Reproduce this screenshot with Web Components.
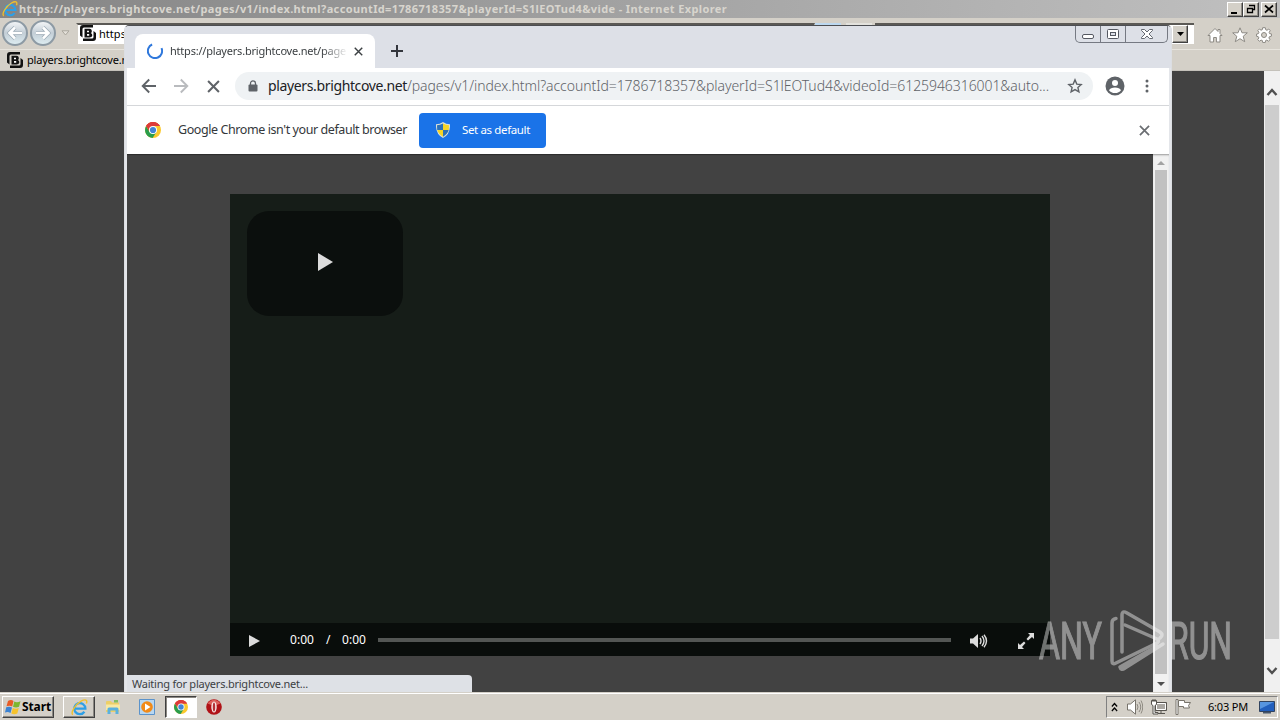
<!DOCTYPE html>
<html lang="en">
<head>
<meta charset="utf-8">
<title>Desktop</title>
<style>
    html, body {
        margin: 0;
        width: 1280px;
        height: 720px;
        overflow: hidden;
        font: 11px/14px "Noto Sans", "Open Sans", sans-serif;
        color: #000;
    }
</style>
</head>
<body>
<desktop-screen></desktop-screen>
<script>
const BALL = `
    <circle cx="8" cy="8" r="8" fill="#fbc92d"/>
    <path d="M8 8L1.1 4A8 8 0 0 1 14.9 4H8z" fill="#dd3b3a"/>
    <path d="M1.1 4A8 8 0 0 0 7.6 16L11.4 10 8 8 4.6 10z" fill="#2a9d4c"/>
    <path d="M1.1 4A8 8 0 0 1 14.9 4H8A4 4 0 0 0 4.2 9.2z" fill="#dd3b3a"/>
    <circle cx="8" cy="8" r="4" fill="#fff"/><circle cx="8" cy="8" r="3.1" fill="#4285d6"/>`;

const GLOBE = `
    <path d="M3.500 9H13.500A5.200 5.200 0 1 0 12.600 12" fill="none" stroke="#2d9fe6" stroke-width="2.200"/>
    <path d="M1.800 14.800C-.8 13.500 3.500 5.500 9.500 2 13.500-.3 15.800.8 14.500 4.200" fill="none" stroke="#f0c02c" stroke-width="1.300"/>`;

const ICONS = {
    chrome: ["0 0 16 16", BALL],
    ie: ["0 0 16 16", GLOBE],
    brightcove: ["0 0 16 16", `
        <path d="M3 0H13V2.500H4Q2.500 2.500 2.500 4V12.500L0 10.500V3Q0 0 3 0zM3 16V13.500H12Q13.500 13.500 13.500 12V6L16 8V13Q16 16 13 16z" fill="#111"/>
        <path d="M4.500 3.700H9.500Q12 4 11.800 6.500 11.600 7.500 11 8 12.500 9 12.300 10.500 12 12.500 9.500 12.500H4.500z" fill="#111"/>
        <path d="M7 5.700h2v1.500H7zM7 9h2.200v1.700H7z" fill="#fff"/>`],
    arrowLeft: ["0 0 16 16", `<path d="M15 8H2M8.200 1.500L1.700 8l6.500 6.500" fill="none" stroke="currentColor" stroke-width="1.900"/>`],
    arrowRight: ["0 0 16 16", `<path d="M1 8h13M7.800 1.500L14.300 8l-6.500 6.500" fill="none" stroke="currentColor" stroke-width="1.900"/>`],
    roundLeft: ["0 0 16 16", `<path d="M15 8H3M8 2.500L2.500 8 8 13.500" fill="none" stroke="#9aa9b4" stroke-width="4"/><path d="M15 8H3M8 2.500L2.500 8 8 13.500" fill="none" stroke="#fff" stroke-width="2.600"/>`],
    roundRight: ["0 0 16 16", `<path d="M1 8h12M8 2.500L13.500 8 8 13.500" fill="none" stroke="#9aa9b4" stroke-width="4"/><path d="M1 8h12M8 2.500L13.500 8 8 13.500" fill="none" stroke="#fff" stroke-width="2.600"/>`],
    close: ["0 0 12 12", `<path d="M1 1l10 10M11 1L1 11" stroke="currentColor" stroke-width="1.900"/>`],
    plus: ["0 0 12 12", `<path d="M6 0v12M0 6h12" stroke="currentColor" stroke-width="2"/>`],
    lock: ["0 0 10 12", `<path d="M2.500 5V3.400a2.500 2.500 0 0 1 5 0V5" fill="none" stroke="currentColor" stroke-width="1.300"/><rect x=".5" y="4.500" width="9" height="7" rx="1" fill="currentColor"/>`],
    star: ["0 0 16 16", `<path d="M8 1.900l1.800 4.200 4.400.4-3.300 3 1 4.400L8 11.600l-3.900 2.300 1-4.400L1.800 6.500l4.400-.4z" fill="none" stroke="currentColor" stroke-width="1.400"/>`],
    account: ["0 0 20 20", `<circle cx="10" cy="10" r="9.500" fill="currentColor"/><circle cx="10" cy="7" r="3" fill="#fff"/><path d="M4 14.200Q5.500 11.500 10 11.500T16 14.200Q14 17 10 17T4 14.200z" fill="#fff"/>`],
    dots: ["0 0 4 14", `<g fill="currentColor"><circle cx="2" cy="2" r="1.500"/><circle cx="2" cy="7" r="1.500"/><circle cx="2" cy="12" r="1.500"/></g>`],
    spinner: ["0 0 16 16", `<path d="M8 .9A7.100 7.100 0 1 0 15.100 8" transform="rotate(-24 8 8) matrix(1 0 0 1 0 0)" fill="none" stroke="#2f78dc" stroke-width="2"/>`],
    shield: ["0 0 14 16", `<path d="M7 0Q10 2.200 14 2.300 14.500 12 7 16-.5 12 0 2.300 4 2.200 7 0z" fill="#d9dfd6"/><path d="M7 1.500V8H1.200L1 3.300Q4 3.200 7 1.500zM7 8h5.700Q11.500 12 7 14.700z" fill="#2b71b8"/><path d="M7 1.500Q10 3.200 13 3.300L12.800 8H7zM7 8H1.300Q2.500 12 7 14.700z" fill="#f6d526"/>`],
    play: ["0 0 16 18", `<path d="M0 0L16 9 0 18z" fill="currentColor"/>`],
    volume: ["0 0 18 14", `<path d="M0 4.500h3L8 0v14L3 9.500H0z" fill="currentColor"/><path d="M10 4q2 3 0 6M12 2q4 5 0 10M14 .8q5 6.200 0 12.400" fill="none" stroke="currentColor" stroke-width="1.400"/>`],
    expand: ["0 0 16 16", `<path d="M10 0h6v6l-2-2-4 3.500L8.500 6 12 2zM6 16H0v-6l2 2 4-3.500L7.500 10 4 14z" fill="currentColor"/>`],
    home: ["0 0 16 16", `<path d="M8 1.500L1 8.500h2V15h3.600v-4.500h2.800V15H13V8.500h2l-2-2V2.500h-2v2z" fill="#fff" stroke="#8c8983"/>`],
    favorite: ["0 0 16 16", `<path d="M8 .8l2 5h5.300L11.200 9.300l1.500 5.400L8 11.700l-4.700 3 1.500-5.400L.7 5.800H6z" fill="#fff" stroke="#8c8983"/>`],
    gear: ["0 0 16 16", `<path d="M6.700.7h2.600l.4 2 1.300.6L12.700 2l1.500 1.600-1 1.800.4 1.200 1.800.3v2.300l-2 .5-.5 1.300 1.200 1.600-1.700 1.600-1.600-1.100-1.200.5-.4 2H6.800l-.4-2-1.300-.5-1.700 1.100-1.700-1.600 1.200-1.700-.6-1.200-1.700-.4V7l1.800-.4.500-1.300-1.100-1.700L3.400 2 5 3.200l1.300-.5z" fill="#fff" stroke="#8c8983"/><circle cx="8" cy="8" r="2.500" fill="#d4d0c8" stroke="#8c8983"/>`],
    minimize: ["0 0 12 5", `<rect x=".5" y=".5" width="11" height="4" rx="1.500" fill="#fff" stroke="#555962"/>`],
    maximize: ["0 0 12 10", `<rect x=".5" y=".5" width="11" height="9" rx="1" fill="#fff" stroke="#555962"/><rect x="3.500" y="3.500" width="5" height="3" fill="#dde0e8" stroke="#555962"/>`],
    windowClose: ["0 0 12 10", `<path d="M.5.5h3L6 3 8.500.5h3v1L8 5l3.500 3.500v1h-3L6 7 3.500 9.500h-3v-1L4 5 .5 1.500z" fill="#fff" stroke="#555962" stroke-width=".9"/>`],
    ieMinimize: ["0 0 10 10", `<path d="M1 8h6v2H1z"/>`],
    ieRestore: ["0 0 10 10", `<path d="M3.500 1.500h5v4h-2M3 1.500h6M1.500 4.500h5v4h-5zM1 4.500h6" fill="none" stroke="#000" stroke-width="1.300"/>`],
    ieClose: ["0 0 10 10", `<path d="M1 1.500l8 7M9 1.500l-8 7" stroke="#000" stroke-width="1.700"/>`],
    caretDown: ["0 0 8 4", `<path d="M0 0h8L4 4z" fill="currentColor"/>`],
    caretUp: ["0 0 8 4", `<path d="M0 4h8L4 0z" fill="currentColor"/>`],
    caretOutline: ["0 0 9 6", `<path d="M1 .8h7L4.500 5z" fill="#e4e1da" stroke="#aaa69d"/>`],
    chevronUp: ["0 0 12 9", `<path d="M1.500 7L6 2l4.500 5" fill="none" stroke="#505050" stroke-width="2.400"/>`],
    chevronDown: ["0 0 12 9", `<path d="M1.500 2L6 7l4.500-5" fill="none" stroke="#505050" stroke-width="2.400"/>`],
    windows: ["0 0 16 16", `<path d="M3 2q3-2 5.500 0L7.200 7.500Q5 6 1.500 7.200z" fill="#e85c26"/><path d="M9.300 2.500Q12 4 15.500 2.200L14 7.800Q11 9.200 8 7.800z" fill="#7db72f"/><path d="M1.200 8.200Q4.500 7 7 8.500L5.500 14Q3 12.500 0 13.500z" fill="#3b83d3"/><path d="M7.800 9q3 1.500 6 .1L12.300 14.500q-3 1.500-6 0z" fill="#f6c32c"/>`],
    folder: ["0 0 16 16", `<path d="M1 3q0-1 1-1h4l1 1.500h7V13H1z" fill="#edcf67"/><path d="M1 5.500h14V11H1z" fill="#f8e9a4"/><path d="M2.500 15V10q0-1.500 1.500-1.500h8q1.500 0 1.500 1.500v5h-3v-3.500h-5V15z" fill="#5bb1de"/><path d="M9 1h4v2.500H9z" fill="#82bd63"/>`],
    media: ["0 0 16 16", `<path d="M.5.5h15v15H.5z" fill="#b8d7f1" stroke="#5b93cb"/><circle cx="8" cy="8" r="5.800" fill="#f18a18"/><path d="M6 4.500L11.500 8 6 11.500z" fill="#fff"/>`],
    opera: ["0 0 16 16", `<circle cx="8" cy="8" r="7.800" fill="#b01217"/><path d="M1.500 4.500Q8-3 14.500 4.500 8 8 1.500 4.500z" fill="#dc5f5a"/><ellipse cx="8" cy="8" rx="2.700" ry="5.500" fill="#f8eae8"/><ellipse cx="8" cy="8" rx="1.200" ry="4.500" fill="#b53035"/>`],
    trayChevrons: ["0 0 8 10", `<path d="M1 4.500l3-3 3 3M1 9l3-3 3 3" fill="none" stroke="#000" stroke-width="1.500"/>`],
    trayVolume: ["0 0 16 16", `<path d="M.5 5h3L8.500.8v14.400L3.500 11h-3z" fill="#fff" stroke="#77736b"/><path d="M10 5q2 3 0 6M12 3q3.500 5 0 10M14 1.500q3.500 6.500 0 13" fill="none" stroke="#8d8981"/>`],
    network: ["0 0 16 16", `<path d="M4.500 3.500h11v8h-11z" fill="#aaa7a2" stroke="#57544f"/><path d="M5.500 4.500h9v6h-9z" fill="none" stroke="#fff"/><path d="M7 14.500h7M10 12v2" stroke="#57544f"/><path d="M.5 1.500h5v4l-1.500 1v7h3v1.500H2V6.500L.5 5.500z" fill="#fff" stroke="#57544f"/><path d="M2 0v3M4 0v3" stroke="#57544f"/>`],
    flag: ["0 0 16 16", `<path d="M1 .5h2v15H1z" fill="#fff" stroke="#77736b"/><path d="M3.500 1.500h6v2h6l-2 3 1 2.500H8.500V7.500h-5z" fill="#fff" stroke="#77736b"/>`],
    monitor: ["0 0 16 13", `<path d="M.5.500h15v10H.5z" fill="#225fbd" stroke="#31435f"/><path d="M1 1h14L1 8z" fill="#5795e0"/><path d="M4 11h8v1.500H4z" fill="#47566b"/>`],
};

function attach(el, markup) {
    el.attachShadow({ mode: "open" }).innerHTML = markup;
}

class UiIcon extends HTMLElement {
    constructor() {
        super();
        this.attachShadow({ mode: "open" });
    }

    connectedCallback() {
        const [viewBox, body] = ICONS[this.getAttribute("name")];
        const width = this.getAttribute("w") || 16;
        const height = this.getAttribute("h") || width;
        this.shadowRoot.innerHTML = `
            <style>
                :host { display: block; flex: none; width: ${width}px; height: ${height}px; }
                svg { display: block; width: 100%; height: 100%; }
            </style>
            <svg viewBox="${viewBox}" preserveAspectRatio="none">${body}</svg>
        `;
    }
}

// One line of text, tracked so that it fills the given width.
class FitText extends HTMLElement {
    constructor() {
        super();
        attach(this, `
            <style>
                :host { display: block; flex: none; white-space: nowrap; }
                span { display: inline-block; }
            </style>
            <span><slot></slot></span>
        `);
    }

    connectedCallback() {
        const target = Number(this.getAttribute("width"));
        const natural = this.shadowRoot.querySelector("span").getBoundingClientRect().width;
        const count = this.textContent.length;
        this.style.width = `${target}px`;
        if (natural) this.style.letterSpacing = `${(target - natural) / count}px`;
    }
}

class DesktopScreen extends HTMLElement {
    constructor() {
        super();
        attach(this, `
            <style>
                :host {
                    position: relative;
                    display: grid;
                    grid-template-rows: 692px 28px;
                    width: 1280px;
                    height: 720px;
                    overflow: hidden;
                }
                chrome-window { position: absolute; left: 124px; top: 25px; }
                brand-mark { position: absolute; left: 1036px; top: 606px; }
            </style>
            <ie-window></ie-window>
            <task-bar></task-bar>
            <chrome-window></chrome-window>
            <brand-mark></brand-mark>
        `);
    }
}

class IeWindow extends HTMLElement {
    constructor() {
        super();
        attach(this, `
            <style>
                :host { display: flex; flex-direction: column; background: #d4d0c8; }
                .title {
                    display: flex;
                    align-items: center;
                    height: 18px;
                    box-sizing: border-box;
                    padding: 0 3px 0 2px;
                    gap: 1px;
                    background: linear-gradient(90deg, #858585, #c0c0c0);
                    color: #d8d5ce;
                    font-weight: 700;
                }
                .title fit-text { margin-right: auto; }
                .button {
                    display: flex;
                    align-items: center;
                    justify-content: center;
                    box-sizing: border-box;
                    width: 16px;
                    height: 15px;
                    background: #d4d0c8;
                    border: 1px solid;
                    border-color: #fff #404040 #404040 #fff;
                    box-shadow: inset -1px -1px #908d87;
                }
                .button.last { margin-left: 1px; }
                .tools { display: flex; height: 31px; padding: 0 8px 0 2px; }
                .nav { display: flex; align-items: center; height: 30px; }
                .round {
                    display: flex;
                    align-items: center;
                    justify-content: center;
                    box-sizing: border-box;
                    width: 26px;
                    height: 26px;
                    border: 2px solid #8d9aa4;
                    border-radius: 50%;
                    background: linear-gradient(#f2f4f6, #c3ced6 50%, #dcebf0);
                    margin-right: 2px;
                }
                .nav ui-icon.menu { margin-left: 3px; }
                .address {
                    display: flex;
                    box-sizing: border-box;
                    height: 21px;
                    margin: 5px 0 0 6px;
                    width: 739px;
                    padding: 0 0 0 2px;
                    gap: 3px;
                    background: #fff;
                    border: 1px solid #404040;
                    border-width: 2px 1px 0 2px;
                    border-color: #5b5955 #d4d0c8;
                    overflow: hidden;
                    line-height: 17px;
                }
                .mini { display: flex; gap: 5px; width: 60px; height: 20px; margin-top: 5px; }
                .mini i { width: 26px; background: #bcd8f0; }
                .mini i + i { background: #e3e2dd; }
                .search {
                    display: flex;
                    justify-content: flex-end;
                    box-sizing: border-box;
                    width: 319px;
                    height: 21px;
                    margin-top: 5px;
                    padding: 0 6px 0 0;
                    background: #fff;
                    border-top: 2px solid #5b5955;
                }
                .search .button { height: 18px; }
                .commands { display: flex; align-items: center; margin: 3px 0 0 13px; gap: 8.5px; }
                .bookmarks { display: flex; align-items: center; height: 21px; padding: 0 0 1px 7px; gap: 4px; border-top: 1px solid #e7e4dd; box-sizing: border-box; }
                .page { display: flex; justify-content: flex-end; flex: 1; background: #424242; border-top: 1px solid #c4c1ba; }
                .bar { display: flex; flex-direction: column; width: 16px; background: #f0f0f0; align-items: center; }
                .bar i { width: 14px; height: 534px; background: #cdcdcd; }
                .bar ui-icon { margin: 17px 0 8px; }
                .bar i + ui-icon { margin: 27px 0 0; }
            </style>
            <div class="title">
                <ui-icon name="ie" w="16"></ui-icon>
                <fit-text width="708">https://players.brightcove.net/pages/v1/index.html?accountId=1786718357&amp;playerId=S1lEOTud4&amp;vide - Internet Explorer</fit-text>
                <div class="button"><ui-icon name="ieMinimize" w="10"></ui-icon></div>
                <div class="button" style="margin-left:-1px"><ui-icon name="ieRestore" w="10"></ui-icon></div>
                <div class="button last"><ui-icon name="ieClose" w="10"></ui-icon></div>
            </div>
            <div class="tools">
                <div class="nav">
                    <div class="round"><ui-icon name="roundLeft" w="16"></ui-icon></div>
                    <div class="round"><ui-icon name="roundRight" w="16"></ui-icon></div>
                    <ui-icon class="menu" name="caretOutline" w="9" h="6"></ui-icon>
                </div>
                <div class="address"><ui-icon name="brightcove" w="16"></ui-icon><fit-text width="27">https</fit-text></div>
                <div class="mini"><i></i><i></i></div>
                <div class="search"><div class="button"><ui-icon name="caretDown" w="7" h="4"></ui-icon></div></div>
                <div class="commands">
                    <ui-icon name="home" w="16"></ui-icon>
                    <ui-icon name="favorite" w="16"></ui-icon>
                    <ui-icon name="gear" w="16"></ui-icon>
                </div>
            </div>
            <div class="bookmarks"><ui-icon name="brightcove" w="16"></ui-icon><fit-text width="101">players.brightcove.n</fit-text></div>
            <div class="page">
                <div class="bar">
                    <ui-icon name="chevronUp" w="12" h="9"></ui-icon>
                    <i></i>
                    <ui-icon name="chevronDown" w="12" h="9"></ui-icon>
                </div>
            </div>
        `);
    }
}

class ChromeWindow extends HTMLElement {
    constructor() {
        super();
        attach(this, `
            <style>
                :host {
                    display: flex;
                    flex-direction: column;
                    box-sizing: border-box;
                    width: 1048px;
                    height: 667px;
                    padding: 0 2px;
                    border: 1px solid #4c4e52;
                    border-width: 1px 1px 0;
                    border-color: #4c4e52 #dcdee2 #dcdee2;
                    border-radius: 5px 5px 0 0;
                    background: #e4e6ea;
                    overflow: hidden;
                }
                .strip, .toolbar, .info { flex: none; }
                .strip { display: flex; height: 42px; margin: 0 -2px; padding: 0 3px 0 10px; background: #dde0e7; }
                .tab {
                    display: flex;
                    align-items: center;
                    box-sizing: border-box;
                    width: 240px;
                    height: 34px;
                    margin-top: 8px;
                    padding: 0 12px 0 12px;
                    border-radius: 8px 8px 0 0;
                    background: #fff;
                    color: #3c4043;
                }
                .tab fit-text { margin-left: 7px; -webkit-mask-image: linear-gradient(90deg, #000 152px, transparent 178px); }
                .tab ui-icon:last-child { margin-left: auto; }
                .add { margin: 19px auto 0 16px; color: #33363d; }
                .frame {
                    display: flex;
                    height: 17px;
                    box-sizing: border-box;
                    border: 1px solid #757982;
                    border-top: 0;
                    border-radius: 0 0 5px 5px;
                }
                .frame div { display: flex; width: 25px; align-items: center; justify-content: center; border-right: 1px solid #757982; box-sizing: border-box; }
                .frame div:last-child { width: 41px; border: 0; }
                .toolbar { display: flex; align-items: center; height: 37px; box-sizing: border-box; padding: 0 18px 1px 14px; background: #fff; color: #5f6368; }
                .omnibox {
                    display: flex;
                    align-items: center;
                    box-sizing: border-box;
                    width: 858px;
                    height: 28px;
                    margin-left: 15px;
                    padding: 0 10px 0 13px;
                    border-radius: 14px;
                    background: #eff2f4;
                    font-size: 14px;
                    font-weight: 300;
                    line-height: 20px;
                }
                .omnibox .site { margin-left: 10px; color: #202124; font-weight: 400; }
                .omnibox ui-icon:last-child { margin-left: auto; }
                .info { display: flex; align-items: center; height: 49px; box-sizing: border-box; padding: 0 19px 0 18px; background: #fff; border-top: 1px solid #d5d7da; }
                .info .message { margin-left: 17px; font-size: 12.5px; color: #34373b; }
                .info button {
                    display: flex;
                    align-items: center;
                    box-sizing: border-box;
                    width: 127px;
                    height: 35px;
                    margin: 0 auto 0 12px;
                    padding: 0 0 0 17px;
                    gap: 12px;
                    border: 0;
                    border-radius: 4px;
                    background: #1a73e8;
                    color: #fff;
                    font: inherit;
                    font-size: 11.5px;
                }
                .content { position: relative; display: flex; justify-content: space-between; flex: 1; min-height: 0; background: #424242; box-shadow: inset 0 2px 1px -1px #2c2c2c; }
                video-player { margin: 40px 0 0 103px; }
                .bar { display: flex; flex-direction: column; align-items: center; width: 16px; background: #f1f1f1; box-shadow: inset 0 2px 2px -1px #999; }
                .bar i { flex: none; width: 12px; height: 504px; background: #c1c1c1; }
                .bar ui-icon { color: #a3a3a3; margin: 7px 0 5px; }
                .bar i + ui-icon { color: #505050; margin: 8px 0 0; }
                .status {
                    position: absolute;
                    left: 0;
                    bottom: 0;
                    box-sizing: border-box;
                    width: 345px;
                    height: 17px;
                    padding: 2px 0 0 5px;
                    border-radius: 0 4px 0 0;
                    background: #dee1e6;
                    color: #3c4043;
                }
            </style>
            <div class="strip">
                <div class="tab">
                    <ui-icon name="spinner" w="16"></ui-icon>
                    <fit-text width="176">https://players.brightcove.net/page</fit-text>
                    <ui-icon name="close" w="9"></ui-icon>
                </div>
                <ui-icon class="add" name="plus" w="12"></ui-icon>
                <div class="frame">
                    <div><ui-icon name="minimize" w="12" h="5" style="margin-top:4px"></ui-icon></div>
                    <div><ui-icon name="maximize" w="12" h="10"></ui-icon></div>
                    <div><ui-icon name="windowClose" w="12" h="10"></ui-icon></div>
                </div>
            </div>
            <div class="toolbar">
                <ui-icon name="arrowLeft" w="16"></ui-icon>
                <ui-icon name="arrowRight" w="16" style="margin-left:16px;color:#b9bbbe"></ui-icon>
                <ui-icon name="close" w="13" style="margin-left:18px"></ui-icon>
                <div class="omnibox">
                    <ui-icon name="lock" w="10" h="12"></ui-icon>
                    <fit-text class="site" width="139">players.brightcove.net</fit-text>
                    <fit-text width="642">/pages/v1/index.html?accountId=1786718357&amp;playerId=S1lEOTud4&amp;videoId=6125946316001&amp;auto...</fit-text>
                    <ui-icon name="star" w="16"></ui-icon>
                </div>
                <ui-icon name="account" w="20" style="margin-left:12px"></ui-icon>
                <ui-icon name="dots" w="4" h="14" style="margin-left:20px"></ui-icon>
            </div>
            <div class="info">
                <ui-icon name="chrome" w="16"></ui-icon>
                <fit-text class="message" width="229">Google Chrome isn't your default browser</fit-text>
                <button><ui-icon name="shield" w="14" h="16"></ui-icon><fit-text width="68">Set as default</fit-text></button>
                <ui-icon name="close" w="11" style="color:#6b6e72"></ui-icon>
            </div>
            <div class="content">
                <video-player></video-player>
                <div class="bar">
                    <ui-icon name="caretUp" w="8" h="4"></ui-icon>
                    <i></i>
                    <ui-icon name="caretDown" w="8" h="4"></ui-icon>
                </div>
                <div class="status"><fit-text width="176">Waiting for players.brightcove.net...</fit-text></div>
            </div>
        `);
    }
}

class VideoPlayer extends HTMLElement {
    constructor() {
        super();
        attach(this, `
            <style>
                :host {
                    display: flex;
                    flex-direction: column;
                    justify-content: space-between;
                    width: 820px;
                    height: 462px;
                    background: #161d18;
                    color: #dcdcdc;
                }
                .poster {
                    display: flex;
                    align-items: center;
                    justify-content: center;
                    box-sizing: border-box;
                    width: 156px;
                    height: 105px;
                    margin: 17px 0 0 17px;
                    padding-bottom: 3px;
                    border-radius: 22px;
                    background: #0b0f0d;
                }
                .controls { display: flex; align-items: center; height: 33px; padding: 0 16px 0 19px; background: #090d0b; }
                .controls fit-text { color: #fff; font-size: 12px; }
                .track { width: 573px; height: 4px; margin-left: 12px; background: #535654; }
            </style>
            <div class="poster"><ui-icon name="play" w="15" h="18"></ui-icon></div>
            <div class="controls">
                <ui-icon name="play" w="11" h="12" style="margin-top:2px"></ui-icon>
                <fit-text width="24" style="margin-left:30px">0:00</fit-text>
                <fit-text width="4" style="margin:0 12px">/</fit-text>
                <fit-text width="24">0:00</fit-text>
                <div class="track"></div>
                <ui-icon name="volume" w="18" h="14" style="margin:2px auto 0 19px"></ui-icon>
                <ui-icon name="expand" w="16" h="16" style="margin-top:3px"></ui-icon>
            </div>
        `);
    }
}

class TaskBar extends HTMLElement {
    constructor() {
        super();
        attach(this, `
            <style>
                :host {
                    display: flex;
                    align-items: center;
                    box-sizing: border-box;
                    padding: 1px 2px 0;
                    background: #d4d0c8;
                    border-top: 1px solid #d4d0c8;
                    box-shadow: inset 0 1px #fff;
                }
                .button {
                    display: flex;
                    align-items: center;
                    justify-content: center;
                    box-sizing: border-box;
                    width: 32px;
                    height: 22px;
                    border: 1px solid;
                    border-color: #fff #404040 #404040 #fff;
                    box-shadow: inset -1px -1px #8b8882;
                }
                .start { width: 52px; font-weight: 700; font-size: 12px; gap: 1px; }
                .pressed { border-color: #404040 #fff #fff #404040; background: #fff; box-shadow: inset 1px 1px #8b8882; }
                .tray {
                    display: flex;
                    align-items: center;
                    box-sizing: border-box;
                    width: 172px;
                    height: 22px;
                    margin-left: auto;
                    padding: 0 2px 0 4px;
                    border: 1px solid;
                    border-color: #808080 #fff #fff #808080;
                }
            </style>
            <div class="button start"><ui-icon name="windows" w="16"></ui-icon><fit-text width="29">Start</fit-text></div>
            <div class="button" style="margin-left:9px"><ui-icon name="ie" w="17"></ui-icon></div>
            <ui-icon name="folder" w="16" style="margin-left:10px"></ui-icon>
            <ui-icon name="media" w="16" style="margin-left:18px"></ui-icon>
            <div class="button pressed" style="margin-left:10px"><ui-icon name="chrome" w="14"></ui-icon></div>
            <ui-icon name="opera" w="16" style="margin-left:9px"></ui-icon>
            <div class="tray">
                <ui-icon name="trayChevrons" w="7" h="10"></ui-icon>
                <ui-icon name="trayVolume" w="16" style="margin-left:9px"></ui-icon>
                <ui-icon name="network" w="16" style="margin-left:8px"></ui-icon>
                <ui-icon name="flag" w="16" style="margin-left:8px"></ui-icon>
                <fit-text width="40" style="margin-left:17px">6:03 PM</fit-text>
                <ui-icon name="monitor" w="16" h="13" style="margin-left:auto"></ui-icon>
            </div>
        `);
    }
}

class BrandMark extends HTMLElement {
    constructor() {
        super();
        attach(this, `
            <style>
                :host { display: block; width: 220px; height: 80px; opacity: .42; }
                svg { display: block; overflow: visible; }
                text { font: 400 52px Roboto, sans-serif; fill: #fff; stroke: #fff; stroke-width: 1.2; }
            </style>
            <svg width="220" height="80" viewBox="0 0 220 80">
                <text x="3" y="53" textLength="63" lengthAdjust="spacingAndGlyphs">ANY</text>
                <text x="133" y="53" textLength="63" lengthAdjust="spacingAndGlyphs">RUN</text>
                <g fill="none" stroke="#fff" stroke-width="3.500" stroke-linejoin="round" stroke-linecap="round">
                    <path d="M80 12.500Q76 13 76 17V55Q76 59 80 57L121 37Q124 35 121 33L89 19"/>
                    <path d="M86 46V9Q86 4 91 7L124 26Q128 29 124 32"/>
                    <path d="M127 38L89 62Q85 65 84 61L121 40"/>
                </g>
            </svg>
        `);
    }
}

customElements.define("ui-icon", UiIcon);
customElements.define("desktop-screen", DesktopScreen);
customElements.define("ie-window", IeWindow);
customElements.define("chrome-window", ChromeWindow);
customElements.define("video-player", VideoPlayer);
customElements.define("task-bar", TaskBar);
customElements.define("brand-mark", BrandMark);
// last, so that every line is already laid out when it is measured
customElements.define("fit-text", FitText);
</script>
</body>
</html>
